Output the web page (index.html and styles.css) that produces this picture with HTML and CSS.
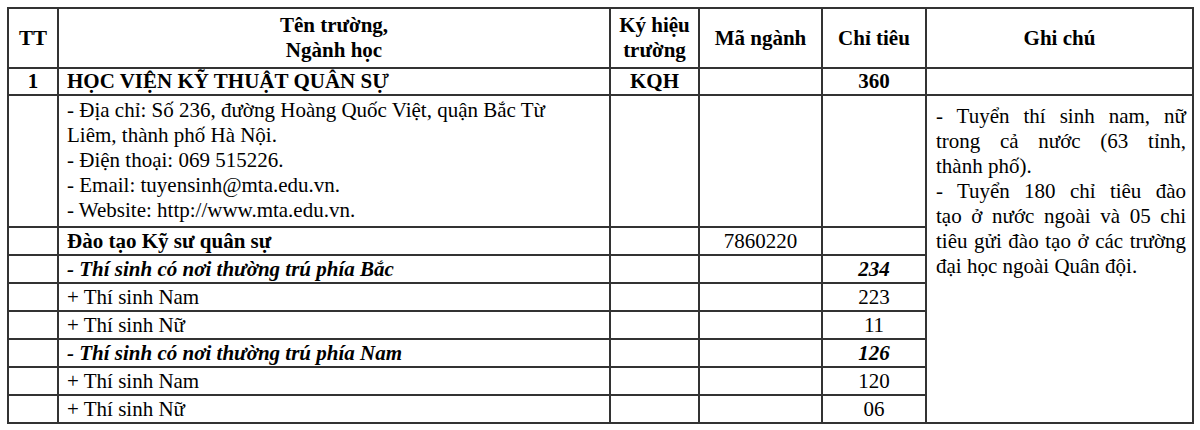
FILE: index.html
```html
<!DOCTYPE html>
<html lang="vi">
<head>
<meta charset="utf-8">
<link rel="stylesheet" href="styles.css">
</head>
<body>
<div class="page">
<table class="tbl">
  <colgroup>
    <col class="c-tt"><col class="c-name"><col class="c-kh"><col class="c-ma"><col class="c-ct"><col class="c-gc">
  </colgroup>
  <tr class="head">
    <th>TT</th>
    <th>Tên trường,<br>Ngành học</th>
    <th>Ký hiệu<br>trường</th>
    <th>Mã ngành</th>
    <th>Chỉ tiêu</th>
    <th>Ghi chú</th>
  </tr>
  <tr class="r1">
    <td class="ctr b">1</td>
    <td class="b">HỌC VIỆN KỸ THUẬT QUÂN SỰ</td>
    <td class="ctr b">KQH</td>
    <td></td>
    <td class="ctr b">360</td>
    <td></td>
  </tr>
  <tr class="info">
    <td></td>
    <td class="infotext">- Địa chỉ: Số 236, đường Hoàng Quốc Việt, quận Bắc Từ<br>Liêm, thành phố Hà Nội.<br>- Điện thoại: 069 515226.<br>- Email: tuyensinh@mta.edu.vn.<br>- Website: http://www.mta.edu.vn.</td>
    <td></td>
    <td></td>
    <td></td>
    <td class="note" rowspan="8">
      <span class="jl">- Tuyển thí sinh nam, nữ</span>
      <span class="jl">trong cả nước (63 tỉnh,</span>
      <span class="ll">thành phố).</span>
      <span class="jl">- Tuyển 180 chỉ tiêu đào</span>
      <span class="jl">tạo ở nước ngoài và 05 chi</span>
      <span class="jl">tiêu gửi đào tạo ở các trường</span>
      <span class="ll">đại học ngoài Quân đội.</span>
    </td>
  </tr>
  <tr class="row">
    <td></td>
    <td class="b">Đào tạo Kỹ sư quân sự</td>
    <td></td>
    <td class="ctr">7860220</td>
    <td></td>
  </tr>
  <tr class="row">
    <td></td>
    <td class="bi">- Thí sinh có nơi thường trú phía Bắc</td>
    <td></td>
    <td></td>
    <td class="ctr bi">234</td>
  </tr>
  <tr class="row">
    <td></td>
    <td>+ Thí sinh Nam</td>
    <td></td>
    <td></td>
    <td class="ctr">223</td>
  </tr>
  <tr class="row">
    <td></td>
    <td>+ Thí sinh Nữ</td>
    <td></td>
    <td></td>
    <td class="ctr">11</td>
  </tr>
  <tr class="row">
    <td></td>
    <td class="bi">- Thí sinh có nơi thường trú phía Nam</td>
    <td></td>
    <td></td>
    <td class="ctr bi">126</td>
  </tr>
  <tr class="row">
    <td></td>
    <td>+ Thí sinh Nam</td>
    <td></td>
    <td></td>
    <td class="ctr">120</td>
  </tr>
  <tr class="row">
    <td></td>
    <td>+ Thí sinh Nữ</td>
    <td></td>
    <td></td>
    <td class="ctr">06</td>
  </tr>
</table>
</div>
</body>
</html>
```

FILE: styles.css
```css
html, body {
  margin: 0;
  padding: 0;
  background: #ffffff;
}
.page {
  padding: 7px 0 0 7px;
}
.tbl {
  border-collapse: collapse;
  table-layout: fixed;
  width: 1185px;
  font-family: "Liberation Serif", "Times New Roman", serif;
  font-size: 21px;
  color: #000;
  border: 2px solid #555;
}
.c-tt { width: 50px; }
.c-name { width: 552px; }
.c-kh { width: 89px; }
.c-ma { width: 123px; }
.c-ct { width: 104px; }
.c-gc { width: 267px; }
.tbl th, .tbl td {
  border: 2px solid #333;
  padding: 0 8px;
  line-height: 25px;
  vertical-align: middle;
  text-align: left;
}
.tbl th {
  font-weight: bold;
  text-align: center;
  height: 58px;
  padding: 0 2px;
}
.r1 td { height: 25px; }
.info td { height: 128px; }
.row td { height: 26px; }
.ctr { text-align: center !important; padding: 0 2px !important; }
.b { font-weight: bold; }
.bi { font-weight: bold; font-style: italic; }
.infotext {
  vertical-align: top !important;
  padding-top: 2px !important;
}
.tbl td.note {
  vertical-align: top;
  padding: 8px 6px 0 9px;
}
.jl {
  display: block;
  text-align: justify;
  text-align-last: justify;
}
.ll {
  display: block;
  text-align: left;
}
```
